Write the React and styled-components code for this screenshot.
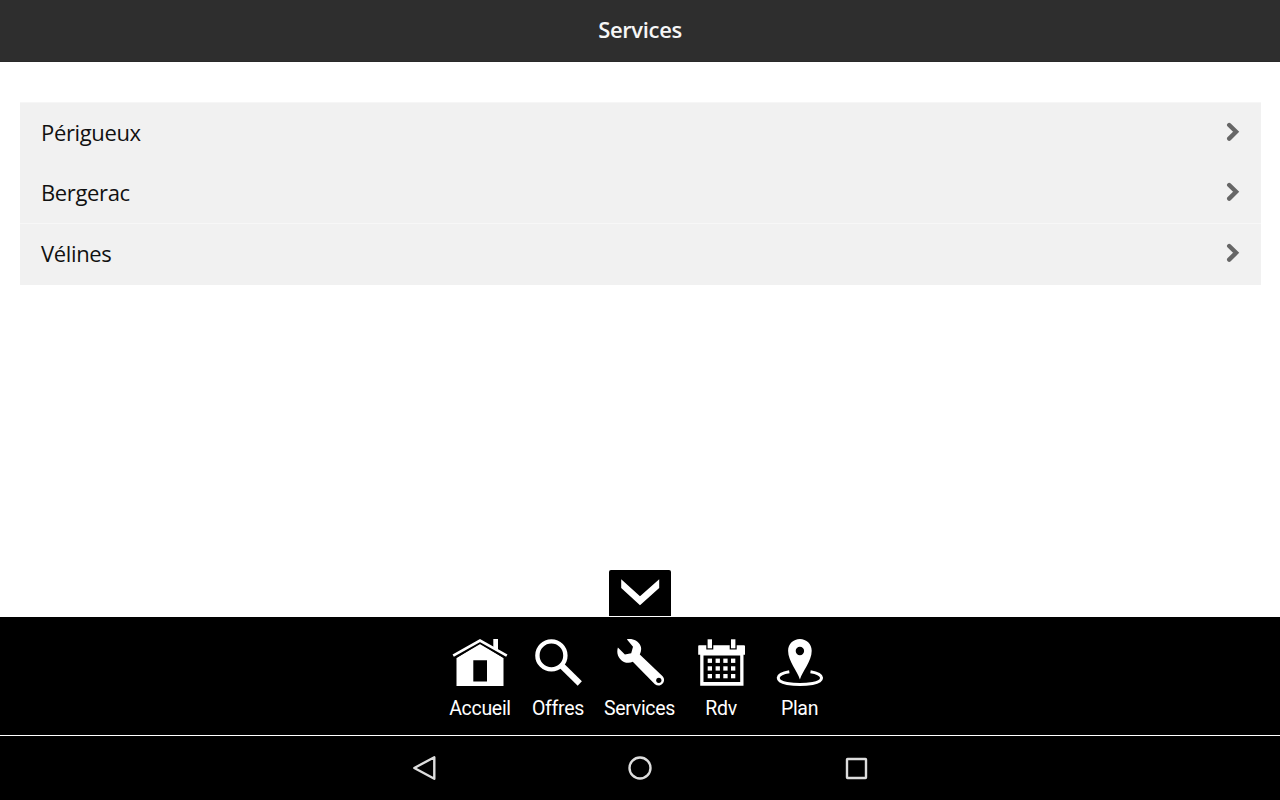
import React from 'react';
import styled, {createGlobalStyle} from 'styled-components';

const GlobalStyle = createGlobalStyle`
  body {
    margin: 0;
    background-color: #fff;
  }
`;

// Styled components
const RootContainer = styled.div`
  display: flex;
  flex-direction: column;
  height: 100vh;
  overflow: hidden;
  font-family: 'Open Sans', sans-serif;
`;

const Header = styled.header`
  height: 62px;
  flex-shrink: 0;
  box-sizing: border-box;
  border-bottom: 1px solid #292929;
  background-color: #2e2e2e;
  display: flex;
  justify-content: center;
`;

const HeaderTitle = styled.h1`
  margin: 0;
  color: #f6f6f6;
  font-size: 22px;
  font-weight: 600;
  letter-spacing: -0.35px;
  line-height: 58px;
`;

const Content = styled.main`
  flex: 1;
  padding: 40px 19px 0 20px;
`;

const List = styled.ul`
  margin: 0;
  padding: 0;
  list-style: none;
  border-top: 1px solid #f6f6f6;
  background-color: #f1f1f1;
`;

const ListRow = styled.li`
  display: flex;
  align-items: center;
  justify-content: space-between;
  box-sizing: border-box;
  height: ${props => props.$height}px;
  padding: 0 21px ${props => props.$lift}px 21px;
  border-bottom: ${props => (props.$divided ? '1px solid #f7f7f7' : '0')};
  color: #111;
  font-size: 22px;
  letter-spacing: -0.35px;
`;

const Toggle = styled.button`
  width: 62px;
  height: 46px;
  flex-shrink: 0;
  align-self: center;
  margin: 0 0 1px;
  padding: 0;
  border: 0;
  border-radius: 2px 2px 0 0;
  background-color: #000;

  svg {
    display: block;
  }
`;

const TabBar = styled.nav`
  height: 118px;
  flex-shrink: 0;
  display: flex;
  justify-content: center;
  background-color: #000;
  border-bottom: 1px solid #fff;
`;

const Tab = styled.div`
  width: ${props => props.$width}px;
  padding-top: 20px;
  display: flex;
  flex-direction: column;
  align-items: center;

  svg {
    flex-shrink: 0;
  }
`;

const TabLabel = styled.span`
  margin-top: 10px;
  color: #fff;
  font-family: Roboto, sans-serif;
  font-size: 19.5px;
  letter-spacing: -0.3px;
  line-height: 24px;
  white-space: nowrap;
`;

const SystemBar = styled.div`
  height: 64px;
  flex-shrink: 0;
  display: flex;
  align-items: center;
  justify-content: center;
  gap: 184px;
  background-color: #000;
`;

// Icons
const ChevronRight = () => (
  <svg width='14' height='20' viewBox='0 0 14 20'>
    <path d='M3.2 3 10.1 9.8 3.2 16.6' fill='none' stroke='#666' strokeWidth='4.4' strokeLinecap='round' />
  </svg>
);

const HomeIcon = () => (
  <svg width='58' height='50' viewBox='0 0 58 50' fill='#fff'>
    <path d='M29 6.5 52.5 21V49H5.5V21ZM22.3 23.3V44.5H36V23.3Z' fillRule='evenodd' />
    <path d='M2 19.4 29 3.7 56 19.4' fill='none' stroke='#000' strokeWidth='6' />
    <path d='M2.2 18.6 29 3.5 55.8 18.6' fill='none' stroke='#fff' strokeWidth='2.7' />
    <path d='M42.3 2H47V14L42.3 11Z' />
  </svg>
);

const SearchIcon = () => (
  <svg width='50' height='50' viewBox='0 0 50 50' fill='none' stroke='#fff'>
    <circle cx='18.4' cy='18.4' r='14' strokeWidth='4.4' />
    <path d='M28.5 28.5 46.8 46.5' strokeWidth='6' />
  </svg>
);

const WrenchIcon = () => (
  <svg width='50' height='50' viewBox='0 0 50 50'>
    <path
      d='M11.8 2.3C17.6 1.3 23.4 3.7 25.6 9C26.7 11.8 26.1 14.7 24.8 17.5L47.6 39.3C52 44.5 45.6 51.4 39.9 47.3L17.8 24.8C13.6 26.8 8.4 25.8 5.1 21.9C2.4 18.7 1.6 14.8 2.9 10.5L9.9 17.4L16.2 16.2L18 9.8Z'
      fill='#fff'
    />
    <circle cx='43.8' cy='43.3' r='2.6' fill='#000' />
  </svg>
);

const CalendarIcon = () => (
  <svg width='50' height='50' viewBox='0 0 50 50' fill='#fff'>
    <path d='M3 8.2H10.3V12.5H17.3V8.2H33.7V12.5H40.7V8.2H48Q49 8.2 49 9.2V17.7H47.5V48.8H4.2V17.7H2.2V9.2Q2.2 8.2 3 8.2ZM7.5 18.5V45H44.2V18.5Z' fillRule='evenodd' />
    <rect x='11.6' y='2.3' width='4.4' height='9' />
    <rect x='35' y='2.3' width='4.4' height='9' />
    {[21.6, 29.3, 37].map(y =>
      [11.7, 19.6, 27.3, 35].map(x => (
        <rect key={`${x}-${y}`} x={x} y={y} width='4.3' height='4.3' />
      ))
    )}
  </svg>
);

const MapIcon = () => (
  <svg width='50' height='50' viewBox='0 0 50 50'>
    <path
      d='M24.9 42.5C22.5 34 13.1 24.5 13.1 13.8C13.1 7 18.4 2 24.9 2S36.7 7 36.7 13.8C36.7 24.5 27.4 34 24.9 42.5ZM24.9 9.8A4.2 4.2 0 1 0 24.9 18.2A4.2 4.2 0 1 0 24.9 9.8Z'
      fill='#fff'
      fillRule='evenodd'
    />
    <path d='M14.3 34.7C0 37 0 44.3 12 46.4C20 47.7 29.8 47.7 37.6 46.4C49.8 44.3 49.8 37 35.5 34.7' fill='none' stroke='#fff' strokeWidth='3' />
  </svg>
);

const tabs = [
  {label: 'Accueil', icon: HomeIcon, width: 83},
  {label: 'Offres', icon: SearchIcon, width: 73},
  {label: 'Services', icon: WrenchIcon, width: 90},
  {label: 'Rdv', icon: CalendarIcon, width: 73},
  {label: 'Plan', icon: MapIcon, width: 84}
];

const cities = [
  {name: 'Périgueux', height: 60, lift: 2},
  {name: 'Bergerac', height: 61, lift: 2, divided: true},
  {name: 'Vélines', height: 61, lift: 3}
];

const App = () => (
  <RootContainer>
    <GlobalStyle />
    <Header>
      <HeaderTitle>Services</HeaderTitle>
    </Header>
    <Content>
      <List>
        {cities.map(city => (
          <ListRow key={city.name} $height={city.height} $lift={city.lift} $divided={city.divided}>
            {city.name}
            <ChevronRight />
          </ListRow>
        ))}
      </List>
    </Content>
    <Toggle aria-label='Menu'>
      <svg width='62' height='46' viewBox='0 0 62 46'>
        <path d='M12.2 9.3 31 26.2 50.2 9.3V18L31 35.2 12.2 18Z' fill='#fff' />
      </svg>
    </Toggle>
    <TabBar>
      {tabs.map(({label, icon: Icon, width}) => (
        <Tab key={label} $width={width}>
          <Icon />
          <TabLabel>{label}</TabLabel>
        </Tab>
      ))}
    </TabBar>
    <SystemBar>
      <svg width='32' height='32' viewBox='0 0 32 32'>
        <path d='M6.3 16 26.3 5.2V26.8Z' fill='none' stroke='#ddd' strokeWidth='2.4' strokeLinejoin='round' />
      </svg>
      <svg width='32' height='32' viewBox='0 0 32 32'>
        <circle cx='16' cy='16' r='10.5' fill='none' stroke='#ddd' strokeWidth='2.4' />
      </svg>
      <svg width='32' height='32' viewBox='0 0 32 32'>
        <rect x='7' y='7' width='19' height='19' rx='0.5' fill='none' stroke='#ddd' strokeWidth='2.4' />
      </svg>
    </SystemBar>
  </RootContainer>
);

export default App;
